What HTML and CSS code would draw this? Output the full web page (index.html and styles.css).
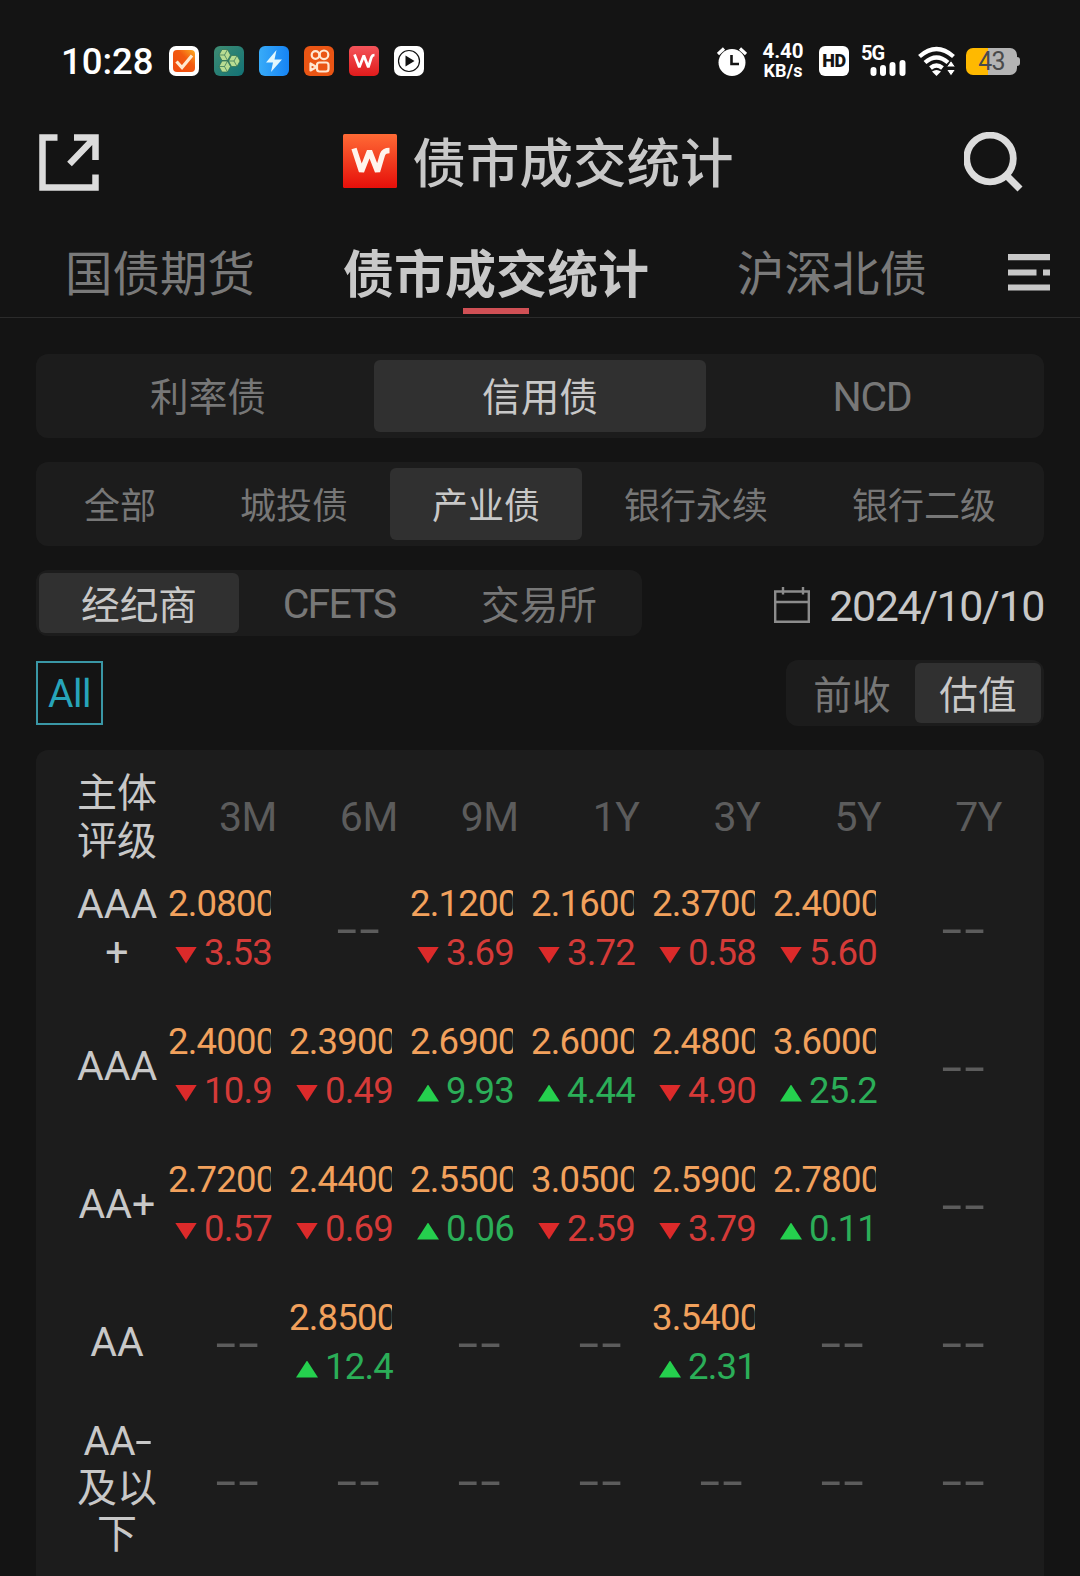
FILE: index.html
```html
<!DOCTYPE html>
<html lang="zh-CN">
<head>
<meta charset="utf-8">
<title>债市成交统计</title>
<link rel="stylesheet" href="styles.css">
</head>
<body>
<div class="statusbar">
  <span class="clock">10:28</span>
  <div class="apps">
    <svg viewBox="0 0 30 30"><defs><linearGradient id="g1" x1="0" y1="1" x2="1" y2="0"><stop offset="0" stop-color="#f04a10"/><stop offset=".6" stop-color="#f25a10"/><stop offset="1" stop-color="#fdb024"/></linearGradient></defs><rect width="30" height="30" rx="7" fill="#fff"/><rect x="4" y="4" width="22" height="22" rx="4" fill="url(#g1)"/><path d="M7.500 15.500l5.500 6L23 9.500" fill="none" stroke="#ffe9cf" stroke-width="3.200"/></svg>
    <svg viewBox="0 0 30 30"><defs><linearGradient id="g2" x1="0" y1="0" x2="1" y2="1"><stop offset="0" stop-color="#3f8c72"/><stop offset="1" stop-color="#127276"/></linearGradient></defs><rect width="30" height="30" rx="6" fill="url(#g2)"/><g fill="#b9dc92" stroke="#2c6f55" stroke-width=".7" stroke-linejoin="round"><path d="M8 3.500h5.500l3 5.500-3 5.500H8L5 9z"/><path d="M8 15h5.500l3 5.500-3 5.500H8l-3-5.500z"/><path d="M17.500 9.500H23l3 5.500-3 5.500h-5.500l-3-5.500z"/><path d="M5 9h5.500l3-5.500M10.500 9l3 5.500M5 20.500h5.500l3-5.500M10.500 20.500l3 5.500M14.500 15H20l3-5.500M20 15l3 5.500" fill="none"/></g></svg>
    <svg viewBox="0 0 30 30"><defs><linearGradient id="g3"><stop offset="0" stop-color="#38abf8"/><stop offset="1" stop-color="#1684f5"/></linearGradient></defs><rect width="30" height="30" rx="6" fill="url(#g3)"/><path d="M17.500 4L7 16.500h7L12 26l11-12.500h-7.500z" fill="#e2f7fd"/></svg>
    <svg viewBox="0 0 30 30"><rect width="30" height="30" rx="6" fill="#ea5514"/><g fill="none" stroke="#ffe7d2" stroke-width="2.200"><circle cx="11.500" cy="9" r="3.800"/><circle cx="20" cy="8.800" r="4.300"/><rect x="13" y="16.500" width="11.500" height="9" rx="2.500"/><path d="M12.500 21L6.500 17.500v7z" stroke-linejoin="round"/></g></svg>
    <svg viewBox="0 0 30 30"><defs><linearGradient id="g4" x2="0" y2="1"><stop offset="0" stop-color="#f4545a"/><stop offset="1" stop-color="#e01b1b"/></linearGradient></defs><rect width="30" height="30" rx="5" fill="url(#g4)"/><path d="M5.500 8.500L10.300 21.300L14.800 9.500L19.300 21.300L22.300 11.500Q23.200 9 25.500 9" fill="none" stroke="#fff" stroke-width="2.700" stroke-linejoin="bevel"/></svg>
    <svg viewBox="0 0 30 30"><rect width="30" height="30" rx="7" fill="#fff"/><circle cx="15" cy="15" r="10.500" fill="none" stroke="#111" stroke-width="1.200"/><path d="M11.500 9.500v11l9-5.500z" fill="#111"/></svg>
  </div>
  <div class="system">
    <svg class="alarm" viewBox="0 0 30 30"><circle cx="15" cy="16.500" r="13.500" fill="#fff"/><path d="M14.500 9v9H22" fill="none" stroke="#141414" stroke-width="2.600"/><path d="M1 8l6-5.500M29 8l-6-5.500" stroke="#fff" stroke-width="3.200"/></svg>
    <div class="speed"><span>4.40</span><span>KB/s</span></div>
    <span class="hd">HD</span>
    <div class="signal"><span>5G</span><svg viewBox="0 0 36 16"><path d="M3.500 13v-3M13 13V8M22.500 13V5M32.500 13V3" stroke="#fff" stroke-width="6" stroke-linecap="round"/></svg></div>
    <svg class="wifi" viewBox="0 0 37 30"><g fill="none" stroke="#fff" stroke-width="4.300"><path d="M1.500 10.500q17-15 34 0"/><path d="M7 16.500q11.500-10 23 0"/><path d="M12.500 22q6-5 12 0"/></g><path d="M14 25.500q4.500-3 9 0L18.500 30z" fill="#fff"/><path d="M33 14.500l-4.500 6.500h9zM33 30l-4.500-6.500h9z" fill="#fff" stroke="#141414"/></svg>
    <div class="battery"><span>43</span></div>
  </div>
</div>

<header class="titlebar">
  <svg class="share" viewBox="0 0 60 57"><path d="M18.500 3.500H3.500V53.500H56.500V40.500M35 3.500H56.500V26M54.500 5L30.500 30" fill="none" stroke="#dcdcdc" stroke-width="6.500"/></svg>
  <div class="brand">
    <svg viewBox="0 0 54 54"><defs><linearGradient id="g5" x2="0" y2="1"><stop offset="0" stop-color="#ff6a35"/><stop offset="1" stop-color="#e60f0a"/></linearGradient></defs><rect width="54" height="54" rx="1.500" fill="url(#g5)"/><path d="M11 14.500L18.500 37.500L26.500 17L34.500 37.500L39.500 20.500Q41 16.500 46.500 16.500" fill="none" stroke="#fff4ec" stroke-width="5.400" stroke-linejoin="bevel"/></svg>
    <h1>债市成交统计</h1>
  </div>
  <svg class="search" viewBox="0 0 60 60"><circle cx="26" cy="26.500" r="23.300" fill="none" stroke="#dcdcdc" stroke-width="6.800"/><path d="M42 43L56 57" stroke="#dcdcdc" stroke-width="7"/></svg>
</header>

<nav class="tabs">
  <span class="tab">国债期货</span>
  <span class="tab current">债市成交统计</span>
  <span class="tab">沪深北债</span>
  <svg class="more" viewBox="0 0 42 37"><path d="M0 3.200h42M0 18.500h28.500M35 18.500h7M0 33.500h42" stroke="#c8c8c8" stroke-width="6.200"/></svg>
</nav>

<main>
  <div class="seg kinds"><span>利率债</span><span class="on">信用债</span><span class="latin">NCD</span></div>
  <div class="seg sectors"><span>全部</span><span>城投债</span><span class="on">产业债</span><span>银行永续</span><span>银行二级</span></div>
  <div class="bar">
    <div class="seg small sources"><span class="on">经纪商</span><span class="latin">CFETS</span><span>交易所</span></div>
    <div class="date">
      <svg viewBox="0 0 36 36"><path d="M1.200 4.500H34.800V34.800H1.200zM1.200 15H34.800M9 0v7.500M29 0v7.500" fill="none" stroke="#8c8c8c" stroke-width="2.400"/></svg>
      <span>2024/10/10</span>
    </div>
  </div>
  <div class="bar second">
    <span class="all">All</span>
    <div class="seg small basis"><span>前收</span><span class="on">估值</span></div>
  </div>

  <section class="card">
    <div class="row head"><div class="label">主体评级</div><div>3M</div><div>6M</div><div>9M</div><div>1Y</div><div>3Y</div><div>5Y</div><div>7Y</div></div>
    <div class="row"><div class="label">AAA<br>+</div>
      <div class="cell down"><b>2.0800</b><i>3.53</i></div>
      <div class="none"><span>--</span></div>
      <div class="cell down"><b>2.1200</b><i>3.69</i></div>
      <div class="cell down"><b>2.1600</b><i>3.72</i></div>
      <div class="cell down"><b>2.3700</b><i>0.58</i></div>
      <div class="cell down"><b>2.4000</b><i>5.60</i></div>
      <div class="none"><span>--</span></div>
    </div>
    <div class="row"><div class="label">AAA</div>
      <div class="cell down"><b>2.4000</b><i>10.9</i></div>
      <div class="cell down"><b>2.3900</b><i>0.49</i></div>
      <div class="cell up"><b>2.6900</b><i>9.93</i></div>
      <div class="cell up"><b>2.6000</b><i>4.44</i></div>
      <div class="cell down"><b>2.4800</b><i>4.90</i></div>
      <div class="cell up"><b>3.6000</b><i>25.2</i></div>
      <div class="none"><span>--</span></div>
    </div>
    <div class="row"><div class="label">AA+</div>
      <div class="cell down"><b>2.7200</b><i>0.57</i></div>
      <div class="cell down"><b>2.4400</b><i>0.69</i></div>
      <div class="cell up"><b>2.5500</b><i>0.06</i></div>
      <div class="cell down"><b>3.0500</b><i>2.59</i></div>
      <div class="cell down"><b>2.5900</b><i>3.79</i></div>
      <div class="cell up"><b>2.7800</b><i>0.11</i></div>
      <div class="none"><span>--</span></div>
    </div>
    <div class="row"><div class="label">AA</div>
      <div class="none"><span>--</span></div>
      <div class="cell up"><b>2.8500</b><i>12.4</i></div>
      <div class="none"><span>--</span></div>
      <div class="none"><span>--</span></div>
      <div class="cell up"><b>3.5400</b><i>2.31</i></div>
      <div class="none"><span>--</span></div>
      <div class="none"><span>--</span></div>
    </div>
    <div class="row"><div class="label lines">AA<span class="dash">-</span><br>及以<br>下</div>
      <div class="none"><span>--</span></div>
      <div class="none"><span>--</span></div>
      <div class="none"><span>--</span></div>
      <div class="none"><span>--</span></div>
      <div class="none"><span>--</span></div>
      <div class="none"><span>--</span></div>
      <div class="none"><span>--</span></div>
    </div>
  </section>
</main>
</body>
</html>
```
FILE: styles.css
```css
* { box-sizing: border-box; }
body {
  margin: 0;
  height: 1576px;
  overflow: hidden;
  display: flex;
  flex-direction: column;
  background: #141414;
  color: #c8c8c8;
  font-family: Roboto, "Noto Sans CJK SC", sans-serif;
}
svg { display: block; flex: none; }

/* phone status bar */
.statusbar { display: flex; flex: none; align-items: center; height: 122px; padding: 0 60px 0 61px; color: #fff; }
.clock { width: 108px; font-size: 36.500px; font-weight: 500; }
.apps { display: flex; gap: 15px; }
.apps svg { width: 30px; height: 30px; }
.system { display: flex; align-items: center; margin-left: auto; }
.alarm { width: 30px; height: 30px; }
.speed { display: flex; flex-direction: column; align-items: center; width: 42px; margin-left: 15px; font-weight: 700; font-size: 20.500px; line-height: 19px; }
.speed span:last-child { font-size: 18px; line-height: 19px; }
.hd { width: 30px; height: 30px; margin-left: 15px; border-radius: 6px; background: #fff; color: #141414; font-size: 18px; font-weight: 900; line-height: 30px; text-align: center; letter-spacing: -.5px; }
.signal { width: 44px; height: 30px; margin-left: 12px; }
.signal span { display: block; height: 14px; font-size: 20px; line-height: 14px; font-weight: 700; letter-spacing: -1px; }
.signal svg { width: 36px; height: 16px; margin-left: 9px; }
.wifi { width: 37px; height: 30px; margin-left: 13px; }
.battery { position: relative; width: 51px; height: 27px; margin-left: 11px; margin-right: 3px; border-radius: 7px; background: linear-gradient(90deg, #ffb900 43%, #b4b4b4 43%); color: #4a4a4a; font-size: 25px; line-height: 28px; text-align: center; letter-spacing: -.8px; }
.battery::after { content: ""; position: absolute; left: 51px; top: 9px; width: 3px; height: 9px; border-radius: 0 3px 3px 0; background: #b4b4b4; }

/* title */
.titlebar { display: flex; flex: none; align-items: center; justify-content: space-between; height: 80px; padding: 0 56px 0 39px; }
.share { width: 60px; height: 57px; }
.brand { display: flex; align-items: center; gap: 16px; margin-left: 13px; }
.brand svg { width: 54px; height: 54px; margin-top: -2px; }
h1 { margin: 0; padding-top: 6px; font-size: 53.500px; line-height: 74px; font-weight: 500; }
.search { width: 60px; height: 60px; }

.tabs { display: flex; flex: none; align-items: center; height: 116px; padding: 26px 30px 0 65px; border-bottom: 1px solid #2b2b2b; }
.tab { padding-top: 5px; color: #7a7a7a; font-size: 47.500px; line-height: 83px; white-space: nowrap; }
.tab.current { position: relative; padding-top: 6px; line-height: 82px; margin: 0 88px; color: #c8c8c8; font-size: 51px; font-weight: 700; }
.tab.current::after { content: ""; position: absolute; left: 120px; bottom: 3px; width: 66px; height: 6px; background: #d05055; }
.more { width: 42px; height: 37px; margin-left: auto; }

/* segmented filters */
main { display: flex; flex-direction: column; flex: 1; min-height: 0; padding: 36px 36px 0; }
.seg { display: flex; flex: none; height: 84px; padding: 6px; border-radius: 12px; background: #1c1c1c; color: #777; font-size: 38.700px; line-height: 66px; text-align: center; }
.seg span { padding-top: 5px; }
.seg .on { border-radius: 6px; background: #303030; color: #c8c8c8; }
.kinds span { flex: 1; }
.sectors { margin-top: 24px; font-size: 36px; }
.sectors span { flex: 1 1 auto; padding-top: 6px; }
.small { height: 66px; padding: 3px; line-height: 55px; }
.sources span { width: 200px; }
.basis span { width: 126px; }
.seg .latin { font-size: 41px; letter-spacing: -1.300px; padding-top: 4px; }
.seg.small .latin { letter-spacing: -1.800px; padding-top: 4px; }
.bar { display: flex; flex: none; align-items: center; justify-content: space-between; height: 66px; margin-top: 24px; }
.date { display: flex; align-items: center; gap: 19px; font-size: 43px; letter-spacing: -1.400px; padding-top: 5px; }
.date svg { width: 36px; height: 36px; margin-top: -2px; }
.all { width: 67px; height: 64px; border: 2px solid #3a97a6; color: #27a4ba; font-size: 39px; line-height: 63px; text-align: center; letter-spacing: -.5px; }

/* yields by rating and term */
.card { flex: 1; margin-top: 24px; padding: 0 40px 0 41px; border-radius: 12px 12px 0 0; background: #1c1c1c; }
.row { display: grid; grid-template-columns: 80px repeat(7, 1fr); min-height: 138px; }
.label { align-self: center; color: #c8c8c8; font-size: 41px; line-height: 48px; text-align: center; white-space: nowrap; }
.lines { padding-top: 8px; font-size: 40px; line-height: 46.500px; }
.dash { display: inline-block; margin: 0 2px; transform: scaleX(1.500); }
.head { height: 109px; min-height: 0; padding: 13px 1px 0 0; align-items: center; color: #5c5c5c; font-size: 41px; text-align: right; }
.head .label { padding-top: 4px; font-size: 40px; line-height: 48px; white-space: normal; }
.head div:not(.label) { padding: 4px 1px 0 0; letter-spacing: -.5px; }
.cell { padding: 20px 0 0 11px; font-size: 36.500px; line-height: 49px; letter-spacing: -.8px; }
.cell b { display: block; width: 103px; overflow: hidden; font-weight: 400; color: #f2a15c; }
.cell i { display: flex; align-items: center; gap: 7px; font-style: normal; padding-left: 7px; }
.cell i::before { content: ""; width: 22px; height: 17px; margin-top: 5px; }
.down i { color: #d53a38; }
.down i::before { background: #dc2a2a; clip-path: polygon(0 0, 100% 0, 50% 100%); }
.up i { color: #2bae58; }
.up i::before { background: #25d04e; clip-path: polygon(50% 0, 100% 100%, 0 100%); }
.head .label { padding-top: 7px; }
.none { height: 138px; padding: 3px 0 0 40px; color: #5c5c5c; font-size: 36px; font-weight: 500; line-height: 138px; text-align: center; }
.none span { display: inline-block; letter-spacing: -.2px; transform: scaleX(1.900); }
```
